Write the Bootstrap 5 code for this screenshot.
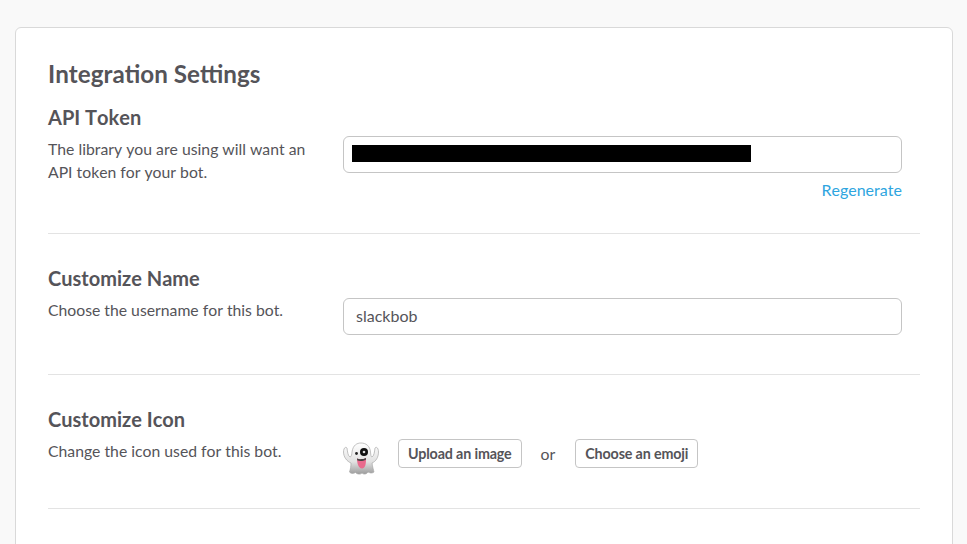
<!DOCTYPE html>
<html lang="en">
<head>
<meta charset="utf-8">
<title>Integration Settings</title>
<link href="https://cdn.jsdelivr.net/npm/bootstrap@5.3.0/dist/css/bootstrap.min.css" rel="stylesheet">
<style>
html,body{height:544px;overflow:hidden}
body{background:#f9f9f9;font-family:Lato,"Liberation Sans",sans-serif;color:#555459;padding:27px 14px 0 15px;font-kerning:none}
.panel{background:#fff;border:1px solid #d9d9d9;border-radius:6px;padding:31px 32px 32px;height:600px}
.panel-title{font-size:24.2px;font-weight:700;line-height:30px;margin:0 0 16px;color:#555459}
.sect-title{font-size:20px;font-weight:700;line-height:24px;margin:0 0 8px;color:#555459}
.sect-text{font-size:15.75px;line-height:23px;margin:0;width:270px}
.left-col{width:295px;flex:none}
.right-col{width:559px;flex:none}
.field{border:1px solid #c5c5c5;border-radius:6px;height:37px;font-size:16px;color:#555459;padding:0 12px 2px;box-shadow:none;font-family:inherit}
.token-box{position:relative}
.redact{position:absolute;left:9px;top:9px;width:399px;height:17px;background:#000}
.regen{color:#2ea5e0;font-size:16px;line-height:20px;text-decoration:none;margin-top:7px}
.divider{border:0;border-top:1px solid #e3e3e3;opacity:1;margin:0}
.one{height:128px}
.two{padding-top:32px;height:140px}
.three{padding-top:32px;height:133px}
.upl{font-size:14.3px;font-weight:700;color:#555459;background:#fff;border:1px solid #c5c5c5;border-radius:4px;height:29px;padding:0 9px;line-height:26px;letter-spacing:-.15px}
.or{font-size:15.8px;color:#555459;margin-right:1px}
.ghost{width:36px;height:34px;flex:none;margin-top:34px}
.gap-or{gap:19px}
.token-top{padding-top:31px}
.name-in{margin-top:32px}
.ms-btns{margin-left:19px;margin-top:32px}
</style>
</head>
<body>
<div class="panel">
  <h2 class="panel-title">Integration Settings</h2>
  <div class="d-flex one">
    <div class="left-col">
      <h3 class="sect-title">API Token</h3>
      <p class="sect-text">The library you are using will want an API token for your bot.</p>
    </div>
    <div class="right-col d-flex flex-column token-top">
      <div class="token-box"><input class="form-control field" type="text" aria-label="API token" readonly><div class="redact"></div></div>
      <a href="#" class="regen text-end">Regenerate</a>
    </div>
  </div>
  <hr class="divider">
  <div class="d-flex two">
    <div class="left-col">
      <h3 class="sect-title">Customize Name</h3>
      <p class="sect-text">Choose the username for this bot.</p>
    </div>
    <div class="right-col"><input class="form-control field name-in" type="text" value="slackbob" aria-label="Username"></div>
  </div>
  <hr class="divider">
  <div class="d-flex three">
    <div class="left-col">
      <h3 class="sect-title">Customize Icon</h3>
      <p class="sect-text">Change the icon used for this bot.</p>
    </div>
    <div class="right-col d-flex align-items-start">
      <svg class="ghost" viewBox="0 0 36 34" aria-hidden="true">
        <defs><linearGradient id="g" x1="0" y1="0" x2="0" y2="1"><stop offset="0" stop-color="#fff"/><stop offset=".6" stop-color="#e2e2e2"/><stop offset="1" stop-color="#9c9c9c"/></linearGradient></defs>
        <path d="M9 11C10 4 14 2 18 2C23 2 27 5 27.500 11C27.800 14 28 16 29 16C31 15 31.500 11 32 7C34 5 35.500 8 35.500 11C35.500 16 33 20.500 29 22C29.500 26 30.500 29 31 31C28.500 33 26.500 31.500 25 31C23.500 33.500 20.500 33.500 19 32C17 34 14 33 12.500 31.500C10.500 32.500 8 33 6.500 31C7.500 28 8 25 8 22C4 20.500 .5 16 .5 11C.5 8 2 5 4 7C4.500 11 5 15 7 16C8.500 16 8.800 13 9 11Z" fill="url(#g)" stroke="#a8a8a8" stroke-width=".7"/>
        <circle cx="21" cy="11" r="4" fill="#111"/>
        <circle cx="21" cy="11" r="1.300" fill="#ddd"/>
        <circle cx="13.500" cy="12.500" r="1.400" fill="#222"/>
        <path d="M14 17.500C16 18.500 20 18.500 23 17C23.200 22 22.500 27.500 19 27.500C15.500 27.500 14 22 14 17.500Z" fill="#e96a8d"/>
        <path d="M14 17.500C16 18.500 20 18.500 23 17L22.900 18.800C20 20.300 16 20.300 14.200 19.300Z" fill="#444"/>
      </svg>
      <div class="d-flex align-items-center gap-or ms-btns">
        <button type="button" class="btn upl">Upload an image</button>
        <span class="or">or</span>
        <button type="button" class="btn upl">Choose an emoji</button>
      </div>
    </div>
  </div>
  <hr class="divider">
</div>
</body>
</html>
